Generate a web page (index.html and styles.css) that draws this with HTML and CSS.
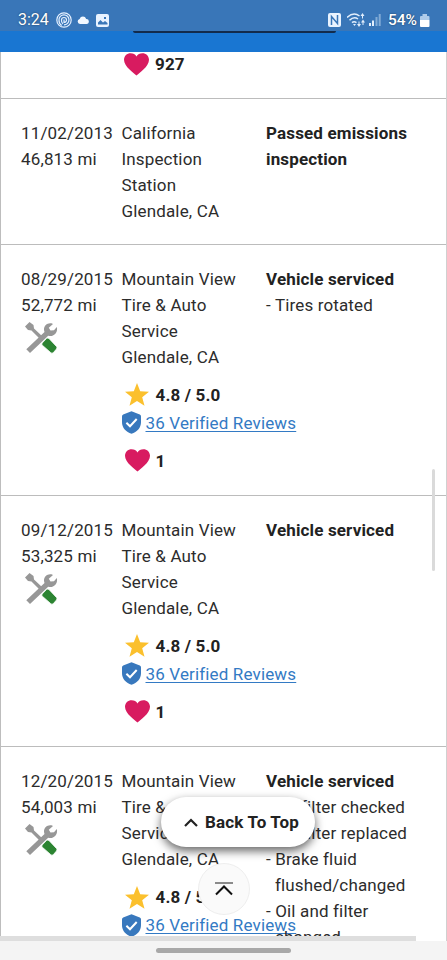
FILE: index.html
```html
<!DOCTYPE html>
<html lang="en">
<head>
<meta charset="utf-8">
<meta name="viewport" content="width=device-width, initial-scale=1">
<title>Vehicle history</title>
<link rel="stylesheet" href="styles.css">
</head>
<body>
<svg class="defs" aria-hidden="true">
  <symbol id="heart" viewBox="0 0 25 23"><path d="M12.5 22.5 C10 20.5 0 13.5 0 6.8 C0 3 3 .3 6.6 .3 C9.2 .3 11.3 1.5 12.5 3.4 C13.7 1.5 15.8 .3 18.4 .3 C22 .3 25 3 25 6.8 C25 13.5 15 20.5 12.5 22.5Z" fill="#d81b60"/></symbol>
  <symbol id="star" viewBox="0 0 24 23"><path d="M12 0 L15.2 8.2 L24 8.7 L17.2 14.2 L19.5 22.7 L12 17.9 L4.5 22.7 L6.8 14.2 L0 8.7 L8.8 8.2Z" fill="#fbc02d"/></symbol>
  <symbol id="shield" viewBox="0 0 19 23"><path d="M9.5 .3 L17.8 3.5 Q19 4 19 5.2 V11 C19 17 15 21 9.5 22.8 C4 21 0 17 0 11 V5.2 Q0 4 1.2 3.5Z" fill="#3878bd"/><path d="M4.4 11.7 L8 15.2 L14.7 8" fill="none" stroke="#fff" stroke-width="2"/></symbol>
  <symbol id="tools" viewBox="0 0 34 34"><path d="M1 5.500 L5.500 1 L9.500 4 L10 7.500 L18.500 15.500 L16 18 L7.500 9.500 L4 9Z" fill="#979797"/><path d="M2.300 28.300 L20.500 11 C18.500 6 22.500 1.300 27.500 2.300 L29 3 L24.800 6.800 L26.500 9.500 L30 9.300 L32.800 6 C34.300 11.500 29.500 16.500 24.200 14.700 L6 32Z" fill="#979797"/><path d="M22.700 17.300 Q24 16.500 25.200 17.700 L32.500 25.500 Q33.500 26.700 32.500 28 L29.200 31.800 Q28 32.800 26.800 31.700 L18.300 24.200 Q17.200 23.200 18.200 22Z" fill="#2c8432" stroke="#fff" stroke-width=".8"/></symbol>
</svg>
<div class="screen">
  <header class="status">
    <div class="status-side">
      <span class="clock">3:24</span>
      <svg class="swirl" viewBox="0 0 16 16"><g fill="none" stroke="#e4f0ff" stroke-width="1.200"><circle cx="8" cy="8" r="7.200"/><path d="M5.700 13.500 A6 6 0 0 1 3 8 A5 5 0 1 1 8 12.800"/><path d="M7 12 A4.500 4.500 0 0 1 5.500 8 A2.500 2.500 0 1 1 8 10.500 V7.500"/></g></svg>
      <svg class="cloud" viewBox="0 0 12 8"><path d="M3 8 A2.600 2.600 0 0 1 2.600 2.900 A3.500 3.500 0 0 1 9.200 3 A2.500 2.500 0 0 1 9.500 8Z" fill="#f2f8ff"/></svg>
      <svg class="photo" viewBox="0 0 13 13"><rect width="13" height="13" rx="2" fill="#e9f3ff"/><path d="M2 10.500 V8.500 L4.500 6 L7 8.500 L9 7 L11.500 9 V10.500Z M8 3 h2 v2 h-2Z" fill="#3976b8"/></svg>
    </div>
    <div class="status-side">
      <svg class="nfc" viewBox="0 0 13 14"><rect width="13" height="14" rx="2" fill="#e9f3ff"/><path d="M3.500 12 V3.500 L9.500 10.500 V2" fill="none" stroke="#3976b8" stroke-width="1.500"/></svg>
      <svg class="wifi" viewBox="0 0 18 14"><g fill="none" stroke="#e2eefc" stroke-width="1.500"><path d="M0 4.500 Q6.500 -1.500 12.500 3"/><path d="M2.500 7.200 Q7 3 11 6"/><path d="M5 9.600 Q7 7.800 9.500 9.600"/></g><path d="M6 11 h3 l-1.500 2Z M13.500 3 l2 -3 2 3Z M15 3 h1 v2.500 h-1Z M10 11 h4 l-2 3Z M11.500 8.500 h1 v2.500 h-1Z M14 9.500 h4 l-2 -3Z M15.500 9.500 h1 v2.500 h-1Z" fill="#e2eefc"/></svg>
      <svg class="signal" viewBox="0 0 12 12"><path d="M0 9h2v3H0Z M3 6.500h2V12H3Z" fill="#e2eefc"/><path d="M6.500 3h2v9h-2Z M9.700 0h2v12h-2Z" fill="#82abd6"/></svg>
      <span class="percent">54%</span>
      <svg class="battery" viewBox="0 0 10 13"><path d="M2.500 0 h4.500 v2 h1.500 q1 0 1 1 V6 H0 V3 q0-1 1-1 h1.500Z" fill="#aecbea"/><path d="M0 6 H9.500 V12 q0 1-1 1 H1 q-1 0-1-1Z" fill="#fff"/></svg>
    </div>
  </header>
  <div class="app-bar"><div class="app-line"></div></div>
  <main class="history">
    <section class="top-row"><div class="rating likes"><svg class="heart"><use href="#heart"/></svg><b>927</b></div></section>
    <section class="row first">
      <div>11/02/2013<br>46,813 mi</div>
      <div>California<br>Inspection<br>Station<br>Glendale, CA</div>
      <div><b>Passed emissions inspection</b></div>
    </section>
    <section class="row">
      <div>08/29/2015<br>52,772 mi<svg class="tools"><use href="#tools"/></svg></div>
      <div>Mountain View<br>Tire &amp; Auto<br>Service<br>Glendale, CA
        <div class="rating stars"><svg class="star"><use href="#star"/></svg><b>4.8 / 5.0</b></div>
        <div class="reviews"><svg class="shield"><use href="#shield"/></svg><a href="#">36 Verified Reviews</a></div>
        <div class="rating likes"><svg class="heart"><use href="#heart"/></svg><b>1</b></div>
      </div>
      <div><b>Vehicle serviced</b><div class="item">- Tires rotated</div></div>
    </section>
    <section class="row">
      <div>09/12/2015<br>53,325 mi<svg class="tools"><use href="#tools"/></svg></div>
      <div>Mountain View<br>Tire &amp; Auto<br>Service<br>Glendale, CA
        <div class="rating stars"><svg class="star"><use href="#star"/></svg><b>4.8 / 5.0</b></div>
        <div class="reviews"><svg class="shield"><use href="#shield"/></svg><a href="#">36 Verified Reviews</a></div>
        <div class="rating likes"><svg class="heart"><use href="#heart"/></svg><b>1</b></div>
      </div>
      <div><b>Vehicle serviced</b></div>
    </section>
    <section class="row">
      <div>12/20/2015<br>54,003 mi<svg class="tools"><use href="#tools"/></svg></div>
      <div>Mountain View<br>Tire &amp; Auto<br>Service<br>Glendale, CA
        <div class="rating stars"><svg class="star"><use href="#star"/></svg><b>4.8 / 5.0</b></div>
        <div class="reviews"><svg class="shield"><use href="#shield"/></svg><a href="#">36 Verified Reviews</a></div>
      </div>
      <div><b>Vehicle serviced</b>
        <div class="item">- Air filter checked</div>
        <div class="item">- Air filter replaced</div>
        <div class="item">- Brake fluid<br>flushed/changed</div>
        <div class="item">- Oil and filter<br>changed</div>
      </div>
    </section>
  </main>
  <footer class="nav"><div class="handle"></div></footer>
  <div class="hscroll"></div>
  <div class="vscroll"></div>
  <button class="jump" aria-label="Scroll to top"><svg viewBox="0 0 18 14"><path d="M0 1H18" stroke="#777" stroke-width="1.700"/><path d="M1 12.500 L9 4.500 L17 12.500" fill="none" stroke="#111" stroke-width="2"/></svg></button>
  <button class="back"><svg viewBox="0 0 14 9"><path d="M1 8 L7 2 L13 8" fill="none" stroke="#222" stroke-width="2.200"/></svg>Back To Top</button>
</div>
</body>
</html>
```

FILE: styles.css
```css
* { box-sizing: border-box; }
body { margin: 0; background: #fff; color: #2c2c2c; font: 17px/26px Roboto, sans-serif; letter-spacing: .15px; }
svg { display: block; flex: none; }
.defs { position: absolute; width: 0; height: 0; }
.screen { position: relative; width: 447px; height: 960px; overflow: hidden; display: flex; flex-direction: column; }
.status { flex: none; height: 31px; background: #3976b8; color: #fff; display: flex; justify-content: space-between; padding: 9px 17px 0 18px; letter-spacing: 0; }
.status-side { display: flex; align-items: center; height: 22px; }
.clock { font-size: 16px; line-height: 22px; width: 32px; margin-right: 6px; text-shadow: 0 0 2px #0008; }
.swirl { width: 16px; height: 16px; margin-right: 5px; }
.cloud { width: 12px; height: 8px; margin-right: 7px; }
.photo { width: 13px; height: 13px; }
.nfc { width: 13px; height: 14px; margin-right: 6px; }
.wifi { width: 18px; height: 14px; margin-right: 4px; }
.signal { width: 12px; height: 12px; margin-right: 7px; }
.percent { font-size: 15.500px; font-weight: 500; line-height: 22px; width: 32px; text-shadow: 0 0 2px #0008; }
.battery { width: 10px; height: 13px; }
.app-bar { flex: none; height: 21px; background: #1976d2; }
.app-line { width: 203px; height: 2px; margin-left: 133px; background: #122b4c; border-radius: 0 0 2px 2px; }
.history { flex: 1; min-height: 0; overflow: hidden; border-left: 1px solid #bdbdbd; border-right: 1px solid #d0d0d0; }
.top-row { height: 47px; padding-left: 120px; }
.top-row .rating { margin-top: -1px; }
.row { height: 251.300px; border-top: 1px solid #bcbcbc; display: grid; grid-template-columns: 100.500px 144.500px 1fr; padding: 21px 30px 0 20px; }
.row.first { height: 145.500px; }
b { font-weight: 700; color: #222; }
.tools { width: 34px; height: 34px; margin: 3px 0 0 3px; }
.rating { display: flex; align-items: center; height: 26px; padding-left: 2px; }
.stars { margin-top: 12px; }
.star { width: 24px; height: 23px; margin: 0 7px 0 1px; }
.heart { width: 25px; height: 23px; margin: 0 6px 0 1px; }
.reviews { display: flex; align-items: center; height: 26px; margin: 2px 0 12px; white-space: nowrap; }
.shield { width: 19px; height: 23px; margin-right: 5px; }
a { color: #337ac4; text-decoration: underline; text-decoration-thickness: 1px; text-underline-offset: 2px; }
.item { padding-left: 9px; text-indent: -9px; white-space: nowrap; }
.nav { flex: none; height: 19px; background: #f4f4f4; display: flex; justify-content: center; padding-top: 7px; }
.handle { width: 135px; height: 5px; border-radius: 3px; background: #a8a8a8; }
.hscroll { position: absolute; left: 0; top: 936px; width: 416px; height: 5px; background: #dedede; }
.vscroll { position: absolute; left: 432px; top: 469px; width: 3px; height: 102px; border-radius: 2px; background: #dadada; }
button { border: 0; padding: 0; color: #222; font-family: inherit; display: flex; align-items: center; justify-content: center; }
.jump { position: absolute; left: 198px; top: 863px; width: 52px; height: 52px; border-radius: 50%; background: #fafafa; border: 1px solid #eee; }
.jump svg { width: 18px; height: 14px; }
.back { position: absolute; left: 161px; top: 797px; width: 154px; height: 50px; border-radius: 25px; background: #fff; box-shadow: 0 4px 10px #0009; font-size: 17px; font-weight: 700; letter-spacing: .15px; padding-left: 7px; gap: 7px; white-space: nowrap; }
.back svg { width: 14px; height: 9px; }
```
